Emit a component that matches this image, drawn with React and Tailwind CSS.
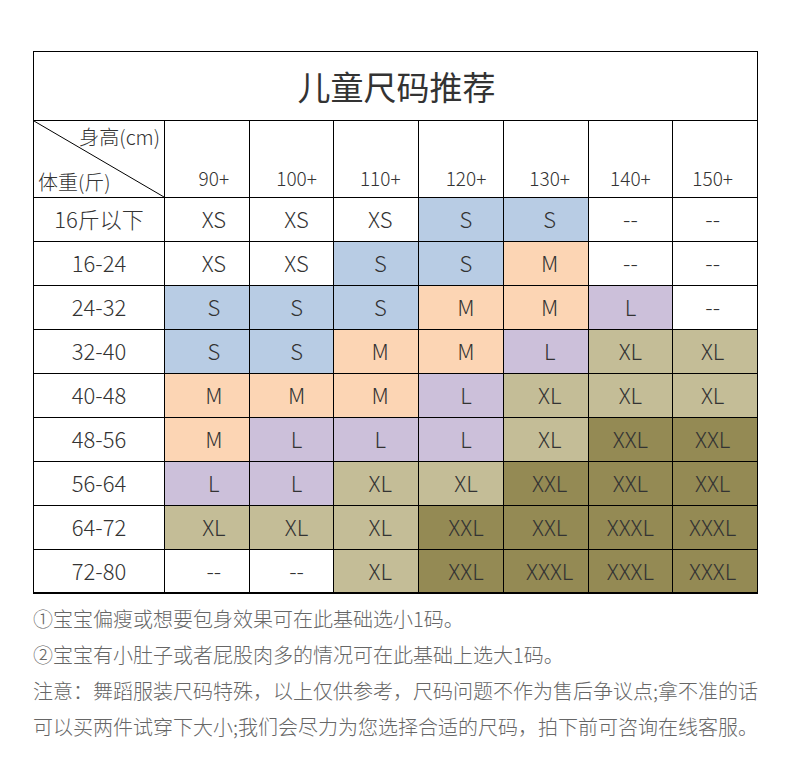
import React from 'react';

const COLORS = {
  W: 'bg-white',
  B: 'bg-[#b8cce4]',
  P: 'bg-[#fcd5b4]',
  V: 'bg-[#ccc0da]',
  K: 'bg-[#c4bd97]',
  O: 'bg-[#948a54]',
};

// text in the source sheet sits a little off-centre per column
const SHIFT = ['pl-[14px]', 'pl-[10px]', 'pl-[8px]', 'pl-[10px]', 'pl-[8px]', '', 'pr-[5px]'];

const heights = ['90+', '100+', '110+', '120+', '130+', '140+', '150+'];

// [weight label, [size, colour] x7]
const rows = [
  ['16斤以下', [['XS', 'W'], ['XS', 'W'], ['XS', 'W'], ['S', 'B'], ['S', 'B'], ['--', 'W'], ['--', 'W']]],
  ['16-24', [['XS', 'W'], ['XS', 'W'], ['S', 'B'], ['S', 'B'], ['M', 'P'], ['--', 'W'], ['--', 'W']]],
  ['24-32', [['S', 'B'], ['S', 'B'], ['S', 'B'], ['M', 'P'], ['M', 'P'], ['L', 'V'], ['--', 'W']]],
  ['32-40', [['S', 'B'], ['S', 'B'], ['M', 'P'], ['M', 'P'], ['L', 'V'], ['XL', 'K'], ['XL', 'K']]],
  ['40-48', [['M', 'P'], ['M', 'P'], ['M', 'P'], ['L', 'V'], ['XL', 'K'], ['XL', 'K'], ['XL', 'K']]],
  ['48-56', [['M', 'P'], ['L', 'V'], ['L', 'V'], ['L', 'V'], ['XL', 'K'], ['XXL', 'O'], ['XXL', 'O']]],
  ['56-64', [['L', 'V'], ['L', 'V'], ['XL', 'K'], ['XL', 'K'], ['XXL', 'O'], ['XXL', 'O'], ['XXL', 'O']]],
  ['64-72', [['XL', 'K'], ['XL', 'K'], ['XL', 'K'], ['XXL', 'O'], ['XXL', 'O'], ['XXXL', 'O'], ['XXXL', 'O']]],
  ['72-80', [['--', 'W'], ['--', 'W'], ['XL', 'K'], ['XXL', 'O'], ['XXXL', 'O'], ['XXXL', 'O'], ['XXXL', 'O']]],
];

const notes = [
  '①宝宝偏瘦或想要包身效果可在此基础选小1码。',
  '②宝宝有小肚子或者屁股肉多的情况可在此基础上选大1码。',
  '注意：舞蹈服装尺码特殊，以上仅供参考，尺码问题不作为售后争议点;拿不准的话',
  '可以买两件试穿下大小;我们会尽力为您选择合适的尺码，拍下前可咨询在线客服。',
];

const App = () => {
  return (
    <div
      className="w-[790px] h-[773px] bg-white text-[#333] font-light overflow-hidden"
      style={{ fontFamily: '"Noto Sans CJK SC", "Noto Sans", sans-serif' }}
    >
      <div className="pt-[51px] pl-[33px]">
        {/* ── Table ── */}
        <div className="w-[725px] border-l border-t border-black">
          <div className="h-[69px] border-r border-b border-black flex items-center justify-center">
            <span className="text-[33px] font-normal leading-none pl-[2px]">儿童尺码推荐</span>
          </div>

          {/* Header row */}
          <div className="grid grid-cols-[131px_repeat(7,1fr)] h-[77px]">
            <div className="relative border-r border-b border-black">
              <svg className="absolute inset-0 w-full h-full" preserveAspectRatio="none" viewBox="0 0 100 100">
                <line x1="0" y1="0" x2="100" y2="100" stroke="#000" strokeWidth="1" vectorEffect="non-scaling-stroke" />
              </svg>
              <span className="absolute right-[4px] top-[2px] text-[20px] leading-[28px]">身高(cm)</span>
              <span className="absolute left-[4px] bottom-[1px] text-[20px] leading-[28px]">体重(斤)</span>
            </div>
            {heights.map((h, j) => (
              <div key={h} className={`border-r border-b border-black flex items-end justify-center pb-[7px] ${SHIFT[j]}`}>
                <span className="text-[19px] leading-[24px]">{h}</span>
              </div>
            ))}
          </div>

          {/* Data rows */}
          {rows.map(([label, cells], i) => {
            const last = i === rows.length - 1;
            return (
              <div
                key={label}
                className={`grid grid-cols-[131px_repeat(7,1fr)] h-[44px] ${last ? 'border-b-2 border-black' : ''}`}
              >
                <div className={`border-r border-black flex items-center justify-center pb-[3px] ${last ? '' : 'border-b'}`}>
                  <span className="text-[22px] leading-none">{label}</span>
                </div>
                {cells.map(([size, c], j) => (
                  <div
                    key={j}
                    className={`${COLORS[c]} ${SHIFT[j]} border-r border-black flex items-center justify-center pb-[3px] ${last ? '' : 'border-b'}`}
                  >
                    <span className="text-[22px] leading-none">{size}</span>
                  </div>
                ))}
              </div>
            );
          })}
        </div>

        {/* ── Notes ── */}
        <div className="mt-[7px] text-[#666] text-[20px] leading-[36px] whitespace-nowrap">
          {notes.map((n) => (
            <p key={n}>{n}</p>
          ))}
        </div>
      </div>
    </div>
  );
};

export default App;
